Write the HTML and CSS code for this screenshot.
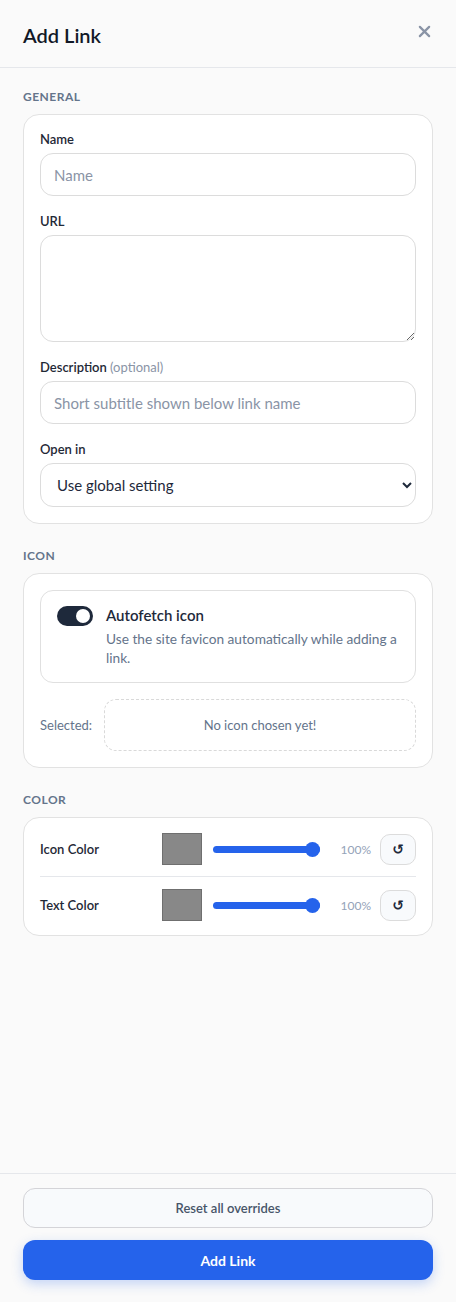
FILE: index.html
```html
<!DOCTYPE html>
<html lang="en">
<head>
    <meta charset="UTF-8">
    <meta name="viewport" content="width=device-width, initial-scale=1.0">
    <title>Add Link</title>
    <link rel="stylesheet" href="styles.css">
</head>
<body>
    <div class="panel">
        <header class="panel-header">
            <h1>Add Link</h1>
            <button class="close-btn" aria-label="Close">
                <svg width="13" height="13" viewBox="0 0 14 14"><path d="M2 2 L12 12 M12 2 L2 12" stroke="currentColor" stroke-width="2.4" stroke-linecap="round"/></svg>
            </button>
        </header>

        <main class="panel-body">
            <h2 class="section-title">General</h2>
            <div class="card">
                <div class="field">
                    <label>Name</label>
                    <input type="text" placeholder="Name">
                </div>
                <div class="field">
                    <label>URL</label>
                    <textarea></textarea>
                </div>
                <div class="field">
                    <label>Description <span class="muted">(optional)</span></label>
                    <input type="text" placeholder="Short subtitle shown below link name">
                </div>
                <div class="field">
                    <label>Open in</label>
                    <select>
                        <option>Use global setting</option>
                        <option>New tab</option>
                        <option>Same tab</option>
                    </select>
                </div>
            </div>

            <h2 class="section-title">Icon</h2>
            <div class="card">
                <div class="autofetch">
                    <span class="toggle"><span class="knob"></span></span>
                    <div class="autofetch-text">
                        <div class="autofetch-title">Autofetch icon</div>
                        <div class="autofetch-desc">Use the site favicon automatically while adding a link.</div>
                    </div>
                </div>
                <div class="selected-row">
                    <span class="selected-label">Selected:</span>
                    <div class="selected-box">No icon chosen yet!</div>
                </div>
            </div>

            <h2 class="section-title">Color</h2>
            <div class="card color-card">
                <div class="color-row">
                    <span class="color-name">Icon Color</span>
                    <span class="swatch"></span>
                    <input type="range" class="opacity" min="0" max="100" value="100">
                    <span class="pct">100%</span>
                    <button class="reset-btn">&#8634;</button>
                </div>
                <div class="color-row">
                    <span class="color-name">Text Color</span>
                    <span class="swatch"></span>
                    <input type="range" class="opacity" min="0" max="100" value="100">
                    <span class="pct">100%</span>
                    <button class="reset-btn">&#8634;</button>
                </div>
            </div>
        </main>

        <footer class="panel-footer">
            <button class="btn-secondary">Reset all overrides</button>
            <button class="btn-primary">Add Link</button>
        </footer>
    </div>
</body>
</html>
```

FILE: styles.css
```css
* {
    box-sizing: border-box;
}

body {
    margin: 0;
    font-family: 'Lato', 'Noto Sans', sans-serif;
    background: #fafafa;
    color: #1e293b;
}

.panel {
    height: 100vh;
    display: flex;
    flex-direction: column;
}

.panel-header {
    height: 68px;
    display: flex;
    justify-content: space-between;
    align-items: center;
    padding: 0 23px;
    border-bottom: 1px solid #e5e7eb;
}

h1 {
    margin: 0;
    font-size: 20px;
    font-weight: 600;
    color: #111827;
    padding-top: 2px;
}

.close-btn {
    border: none;
    background: none;
    color: #8a94a6;
    padding: 0;
    margin-right: 2px;
    margin-top: -4px;
    display: flex;
    cursor: pointer;
}

.panel-body {
    flex: 1;
    padding: 20px 23px 0;
}

.section-title {
    margin: 0 0 8px;
    font-size: 12px;
    font-weight: 700;
    text-transform: uppercase;
    letter-spacing: 0.5px;
    color: #64748b;
    line-height: 18px;
}

.card {
    background: #fff;
    border: 1px solid #e2e2e2;
    border-radius: 16px;
    padding: 16px;
    margin-bottom: 23px;
}

.field {
    display: flex;
    flex-direction: column;
}

.field + .field {
    margin-top: 17px;
}

label {
    font-size: 13px;
    font-weight: 600;
    color: #1f2937;
    margin-bottom: 5px;
    line-height: 17px;
}

.muted {
    font-weight: 400;
    color: #8a94a6;
}

input[type="text"],
textarea,
select {
    width: 100%;
    font-family: inherit;
    font-size: 15px;
    border: 1px solid #dcdcdc;
    border-radius: 13px;
    background: #fff;
    color: #1e293b;
    outline: none;
}

input[type="text"] {
    height: 43px;
    padding: 0 13px;
}

input::placeholder {
    color: #8a94a6;
}

textarea {
    height: 107px;
    resize: vertical;
    padding: 10px 13px;
    display: block;
}

select {
    height: 44px;
    padding: 0 12px;
}

/* icon section */
.autofetch {
    display: flex;
    gap: 13px;
    border: 1px solid #e0e0e0;
    border-radius: 13px;
    padding: 14px 16px 15px;
}

.toggle {
    flex-shrink: 0;
    width: 36px;
    height: 20px;
    border-radius: 10px;
    background: #1e293b;
    position: relative;
    margin-top: 1px;
}

.knob {
    position: absolute;
    right: 3px;
    top: 3px;
    width: 14px;
    height: 14px;
    border-radius: 50%;
    background: #fff;
}

.autofetch-title {
    font-size: 15px;
    font-weight: 600;
    color: #1e293b;
    line-height: 20px;
}

.autofetch-desc {
    margin-top: 4px;
    font-size: 13.7px;
    color: #64748b;
    line-height: 19px;
}

.selected-row {
    display: flex;
    align-items: center;
    gap: 12px;
    margin-top: 16px;
}

.selected-label {
    font-size: 13px;
    color: #64748b;
}

.selected-box {
    flex: 1;
    height: 52px;
    border: 1px dashed #d9d9d9;
    border-radius: 12px;
    display: flex;
    align-items: center;
    justify-content: center;
    font-size: 13px;
    color: #64748b;
}

/* color section */
.color-card {
    padding: 15px 16px 14px;
}

.color-row {
    display: flex;
    align-items: center;
}

.color-row + .color-row {
    margin-top: 11px;
    padding-top: 12px;
    border-top: 1px solid #e5e7eb;
}

.color-name {
    width: 122px;
    font-size: 13px;
    font-weight: 600;
    color: #1f2937;
}

.swatch {
    width: 40px;
    height: 32px;
    background: #888888;
    border: 1px solid #6f6f6f;
}

.opacity {
    -webkit-appearance: none;
    appearance: none;
    width: 107px;
    height: 16px;
    margin: 0 0 0 11px;
    background: transparent;
}

.opacity::-webkit-slider-runnable-track {
    height: 7px;
    border-radius: 4px;
    background: #2563eb;
}

.opacity::-webkit-slider-thumb {
    -webkit-appearance: none;
    width: 15px;
    height: 15px;
    border-radius: 50%;
    background: #2563eb;
    margin-top: -4px;
}

.pct {
    margin-left: auto;
    font-size: 12px;
    color: #94a3b8;
}

.reset-btn {
    margin-left: 9px;
    width: 36px;
    height: 31px;
    border: 1px solid #dcdcdc;
    border-radius: 10px;
    background: #f8fafc;
    color: #1e293b;
    font-size: 14px;
    font-weight: 700;
    font-family: 'DejaVu Sans', sans-serif;
    padding: 0;
    cursor: pointer;
}

/* footer */
.panel-footer {
    border-top: 1px solid #e5e7eb;
    padding: 14px 23px 22px;
    display: flex;
    flex-direction: column;
    gap: 12px;
}

.btn-secondary,
.btn-primary {
    width: 100%;
    font-family: inherit;
    border-radius: 12px;
    cursor: pointer;
}

.btn-secondary {
    height: 40px;
    background: #f8fafc;
    border: 1px solid #d4d4d8;
    font-size: 13px;
    font-weight: 600;
    color: #475569;
}

.btn-primary {
    height: 40px;
    background: #2563eb;
    border: none;
    color: #fff;
    font-size: 14px;
    font-weight: 700;
    box-shadow: 0 4px 12px rgba(37, 99, 235, 0.25);
}
```
